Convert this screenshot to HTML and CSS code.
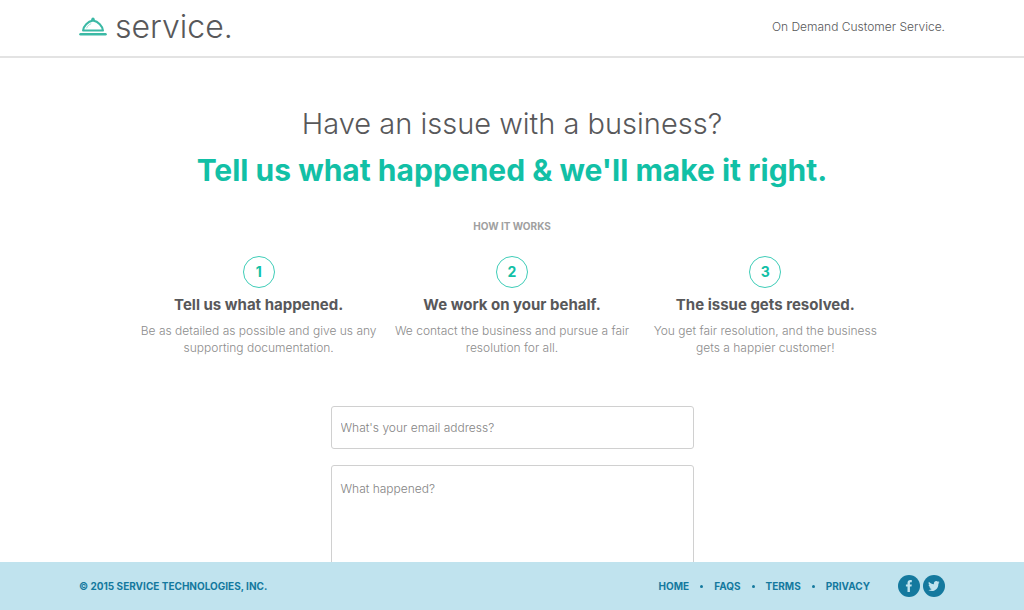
FILE: index.html
```html
<!DOCTYPE html>
<html lang="en">
<head>
<meta charset="utf-8">
<meta name="viewport" content="width=device-width, initial-scale=1">
<title>Service</title>
<link rel="stylesheet" href="styles.css">
</head>
<body>
<header class="site-header">
  <div class="bar">
    <a class="logo" href="#">
      <svg class="logo-bell" viewBox="0 0 28 20" aria-hidden="true">
        <path d="M1.500 17.300H26.500" stroke="currentColor" stroke-width="2.500" stroke-linecap="round"/>
        <path d="M4 13.600C4.600 8.800 8.600 4.600 14 3.600C19.400 4.600 23.400 8.800 24 13.600Z" fill="none" stroke="currentColor" stroke-width="2" stroke-linejoin="round"/>
        <path d="M7.500 11.300C8.500 9.100 10 7.600 12.200 6.700" fill="none" stroke="currentColor" stroke-width="1" opacity=".45"/>
        <circle cx="14" cy="2.300" r="1.700" fill="currentColor"/>
      </svg>
      <span class="logo-name">service.</span>
    </a>
    <p class="tagline">On Demand Customer Service.</p>
  </div>
</header>
<main class="content">
  <h1 class="headline">Have an issue with a business?<strong class="promise">Tell us what happened &amp; we'll make it right.</strong></h1>
  <h2 class="section-title">HOW IT WORKS</h2>
  <ol class="steps">
    <li class="step">
      <span class="step-number">1</span>
      <h3 class="step-title">Tell us what happened.</h3>
      <p class="step-text">Be as detailed as possible and give us any<br>supporting documentation.</p>
    </li>
    <li class="step">
      <span class="step-number">2</span>
      <h3 class="step-title">We work on your behalf.</h3>
      <p class="step-text">We contact the business and pursue a fair<br>resolution for all.</p>
    </li>
    <li class="step">
      <span class="step-number">3</span>
      <h3 class="step-title">The issue gets resolved.</h3>
      <p class="step-text">You get fair resolution, and the business<br>gets a happier customer!</p>
    </li>
  </ol>
  <form class="issue-form">
    <input class="field" type="email" aria-label="What's your email address?" placeholder="What's your email address?">
    <textarea class="field field-large" aria-label="What happened?" placeholder="What happened?"></textarea>
  </form>
</main>
<footer class="site-footer">
  <div class="bar">
    <p class="copyright">© 2015 SERVICE TECHNOLOGIES, INC.</p>
    <div class="footer-right">
      <nav class="footer-nav">
        <a href="#">HOME</a><span class="dot"></span>
        <a href="#">FAQS</a><span class="dot"></span>
        <a href="#">TERMS</a><span class="dot"></span>
        <a href="#">PRIVACY</a>
      </nav>
      <div class="social">
        <a href="#" aria-label="Facebook">
          <svg viewBox="0 0 22 22"><circle cx="11" cy="11" r="11" fill="#14799e"/><path d="M9.500 17V11.600H7.900V9.400H9.500V8C9.500 6 10.600 5 12.400 5H13.800V7.200H12.800C12.100 7.200 11.900 7.500 11.900 8.200V9.400H13.800L13.500 11.600H11.900V17Z" fill="#c0e3ee"/></svg>
        </a>
        <a href="#" aria-label="Twitter">
          <svg viewBox="0 0 22 22"><circle cx="11" cy="11" r="11" fill="#14799e"/><path d="M16.500 7.600L15.400 8.700C15.500 13 12.500 16 9 16C7.500 16 6.300 15.600 5.300 14.900C6.700 15 7.800 14.600 8.700 13.900C7.600 13.800 6.800 13.100 6.500 12.200H7.500C6.300 11.800 5.600 10.900 5.600 9.700L6.600 10C5.600 9.200 5.300 8 5.900 6.800C7.200 8.300 8.900 9.200 10.900 9.300C10.500 7.500 11.700 6.100 13.300 6.100C14 6.100 14.500 6.400 14.900 6.800L16.300 6.300L15.500 7.600Z" fill="#c0e3ee"/></svg>
        </a>
      </div>
    </div>
  </div>
</footer>
</body>
</html>
```
FILE: styles.css
```css
* { box-sizing: border-box; }
body {
  margin: 0;
  height: 100vh;
  display: flex;
  flex-direction: column;
  background: #fff;
  color: #58585a;
  font-family: Inter, "Liberation Sans", sans-serif;
}
h1, h2, h3, p, ol { margin: 0; padding: 0; }
a { color: inherit; text-decoration: none; }

.bar {
  max-width: 898px;
  margin: 0 auto;
  padding: 0 16px;
  display: flex;
  align-items: center;
  justify-content: space-between;
}
.site-header { flex: none; border-bottom: 2px solid #e3e3e3; }
.site-header .bar { height: 56px; padding-bottom: 3px; }
.logo { display: flex; align-items: center; gap: 8px; }
.logo-bell { width: 28px; height: 20px; color: #3bb9a5; }
.logo-name { font-size: 32px; line-height: 40px; font-weight: 300; }
.tagline { font-size: 12px; line-height: 16px; font-weight: 300; }

.content {
  flex: 1;
  min-height: 0;
  overflow-y: auto;
  scrollbar-width: none;
  padding: 43px 16px 40px;
}
.headline {
  font-size: 29px;
  line-height: 46px;
  font-weight: 300;
  text-align: center;
}
.promise { display: block; font-size: 30px; font-weight: 700; color: #12c0a6; }
.section-title {
  margin-top: 25px;
  font-size: 10px;
  line-height: 16px;
  font-weight: 700;
  text-align: center;
  color: #a0a0a0;
}
.steps {
  max-width: 760px;
  margin: 22px auto 0;
  display: grid;
  grid-template-columns: repeat(3, 1fr);
  list-style: none;
  text-align: center;
}
.step { display: flex; flex-direction: column; align-items: center; }
.step-number {
  width: 32px;
  height: 32px;
  border: 1px solid #3fcdb8;
  border-radius: 50%;
  font-size: 14px;
  line-height: 30px;
  font-weight: 700;
  color: #12c0a6;
}
.step-title { margin-top: 6px; font-size: 15px; line-height: 22px; font-weight: 700; }
.step-text {
  margin-top: 6px;
  font-size: 12px;
  line-height: 17px;
  font-weight: 300;
  color: #8c8c8c;
  white-space: nowrap;
}

.issue-form {
  max-width: 363px;
  margin: 50px auto 0;
  display: flex;
  flex-direction: column;
  gap: 16px;
}
.field {
  width: 100%;
  height: 43px;
  padding: 0 9px;
  border: 1px solid #d0d0d0;
  border-radius: 3px;
  background: #fff;
  color: #58585a;
  font: 300 12px/16px Inter, "Liberation Sans", sans-serif;
}
.field::placeholder { color: #848484; opacity: 1; }
.field-large { height: 150px; padding-top: 15px; resize: none; }

.site-footer {
  flex: none;
  background: #c0e3ee;
  color: #14799e;
  font-size: 10px;
  line-height: 16px;
  font-weight: 700;
}
.site-footer .bar { height: 48px; }
.footer-right, .footer-nav, .social { display: flex; align-items: center; }
.footer-right { gap: 28px; }
.footer-nav { gap: 11px; }
.dot { width: 3px; height: 3px; border-radius: 50%; background: currentColor; }
.social { gap: 3px; }
.social svg { display: block; width: 22px; height: 22px; }
```
